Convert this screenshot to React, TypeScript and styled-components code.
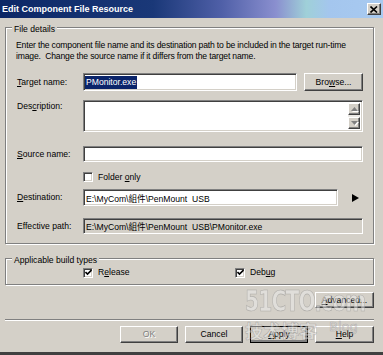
import styled, { createGlobalStyle } from 'styled-components'

const GlobalStyle = createGlobalStyle`
  html, body {
    margin: 0;
    padding: 0;
    background: #d4d0c8;
  }
  body {
    font-family: 'Liberation Sans', Arial, 'Noto Sans CJK TC', sans-serif;
    font-size: 8.6px;
    color: #000;
  }
  * {
    box-sizing: border-box;
  }
`

const raised = `
  background: #d4d0c8;
  border: 1px solid;
  border-color: #fff #404040 #404040 #fff;
  box-shadow: inset -1px -1px 0 #808080;
`

const sunken = `
  border: 1px solid;
  border-color: #808080 #fff #fff #808080;
  box-shadow: inset 1px 1px 0 #404040, inset -1px -1px 0 #d4d0c8;
`

export default function App() {
  return (
    <>
      <GlobalStyle />
      <Window>
        <TitleBar>
          <TitleText>Edit Component File Resource</TitleText>
          <CloseButton>
            <svg width="8" height="7" viewBox="0 0 8 7">
              <path d="M0.5 0.5 L7 6.5 M7 0.5 L0.5 6.5" stroke="#000" strokeWidth="1.6" />
            </svg>
          </CloseButton>
        </TitleBar>

        <Body>
          <GroupBox $h={217} $mt={0}>
            <Caption>File details</Caption>
            <DetailsInner>
              <Hint>
                Enter the component file name and its destination path to be included in the target run-time
                <br />
                image.&nbsp; Change the source name if it differs from the target name.
              </Hint>

              <FieldRow $mt={11.5} $h={18}>
                <Label>
                  <U>T</U>arget name:
                </Label>
                <Controls>
                  <TextBox>
                    <Selected>PMonitor.exe</Selected>
                  </TextBox>
                  <PushButton $w={59}>
                    Bro<U>w</U>se...
                  </PushButton>
                </Controls>
              </FieldRow>

              <FieldRow $mt={9} $h={32}>
                <Label $top>
                  Des<U>c</U>ription:
                </Label>
                <Controls>
                  <MultiLine>
                    <ScrollBar>
                      <ScrollArrow>
                        <svg width="7" height="4" viewBox="0 0 7 4">
                          <path d="M3.5 0 L7 4 L0 4 Z" fill="#808080" />
                        </svg>
                      </ScrollArrow>
                      <ScrollArrow>
                        <svg width="7" height="4" viewBox="0 0 7 4">
                          <path d="M0 0 L7 0 L3.5 4 Z" fill="#808080" />
                        </svg>
                      </ScrollArrow>
                    </ScrollBar>
                  </MultiLine>
                </Controls>
              </FieldRow>

              <FieldRow $mt={14} $h={16}>
                <Label>
                  <U>S</U>ource name:
                </Label>
                <Controls>
                  <TextBox />
                </Controls>
              </FieldRow>

              <FieldRow $mt={10} $h={10}>
                <Label />
                <Controls>
                  <CheckItem>
                    <CheckBox />
                    <span>
                      Folder <U>o</U>nly
                    </span>
                  </CheckItem>
                </Controls>
              </FieldRow>

              <FieldRow $mt={7} $h={17}>
                <Label>
                  <U>D</U>estination:
                </Label>
                <Controls>
                  <TextBox $w={255}>{'E:\\MyCom\\組件\\PenMount  USB'}</TextBox>
                  <ArrowSlot>
                    <svg width="7" height="8" viewBox="0 0 7 8">
                      <path d="M0 0 L7 4 L0 8 Z" fill="#000" />
                    </svg>
                  </ArrowSlot>
                </Controls>
              </FieldRow>

              <FieldRow $mt={12} $h={16}>
                <Label>Effective path:</Label>
                <Controls>
                  <TextBox $disabled>{'E:\\MyCom\\組件\\PenMount  USB\\PMonitor.exe'}</TextBox>
                </Controls>
              </FieldRow>
            </DetailsInner>
          </GroupBox>

          <GroupBox $h={27} $mt={14}>
            <Caption>Applicable build types</Caption>
            <BuildTypes>
              <CheckItem>
                <CheckBox>
                  <CheckMark />
                </CheckBox>
                <span>
                  R<U>e</U>lease
                </span>
              </CheckItem>
              <CheckItem>
                <CheckBox>
                  <CheckMark />
                </CheckBox>
                <span>
                  Deb<U>u</U>g
                </span>
              </CheckItem>
            </BuildTypes>
          </GroupBox>

          <ButtonRow $mt={7} $h={16}>
            <PushButton $w={59}>
              <U>A</U>dvanced...
            </PushButton>
          </ButtonRow>

          <Separator />

          <ButtonRow $mt={5} $h={17}>
            <PushButton $w={58} disabled>
              OK
            </PushButton>
            <PushButton $w={58}>Cancel</PushButton>
            <PushButton $w={58} $default>
              <U>A</U>pply
            </PushButton>
            <PushButton $w={59}>
              <U>H</U>elp
            </PushButton>
          </ButtonRow>
        </Body>

        <Watermark>
          <WatermarkBig>51CTO.com</WatermarkBig>
          <WatermarkSmall>
            技术博客<WatermarkBlog>Blog</WatermarkBlog>
          </WatermarkSmall>
        </Watermark>
      </Window>
    </>
  )
}

function CheckMark() {
  return (
    <svg width="7" height="7" viewBox="0 0 7 7">
      <path d="M0.5 3 L2.5 5 L6.5 1" stroke="#000" strokeWidth="1.6" fill="none" />
    </svg>
  )
}

const Window = styled.div`
  position: relative;
  width: 383px;
  height: 355px;
  overflow: hidden;
  background: #d4d0c8;
  display: flex;
  flex-direction: column;
  border-bottom: 3px solid #404040;
`

const TitleBar = styled.div`
  flex: none;
  height: 18px;
  display: flex;
  align-items: center;
  justify-content: space-between;
  padding: 0 2px 0 2px;
  background: linear-gradient(
    90deg,
    #0c2766 0%,
    #1a3878 40%,
    #5060a8 58%,
    #8a8fcf 72%,
    #9fd0d8 80%,
    #a4c6ee 86%,
    #a8caf0 100%
  );
`

const TitleText = styled.span`
  color: #fff;
  font-weight: bold;
  font-size: 9px;
  line-height: 18px;
`

const CloseButton = styled.div`
  ${raised}
  width: 14px;
  height: 12px;
  display: flex;
  align-items: center;
  justify-content: center;
`

const Body = styled.div`
  display: flex;
  flex-direction: column;
  padding: 9px 9px 0 5px;
`

const GroupBox = styled.div<{ $h: number; $mt: number }>`
  position: relative;
  height: ${(p) => p.$h}px;
  margin-top: ${(p) => p.$mt}px;
  border: 1px solid #808080;
  box-shadow: inset 1px 1px 0 #fff, 1px 1px 0 #fff;
`

const Caption = styled.span`
  position: absolute;
  top: -4px;
  left: 6px;
  padding: 0 2px;
  line-height: 11px;
  background: #d4d0c8;
`

const DetailsInner = styled.div`
  display: flex;
  flex-direction: column;
  padding: 11.5px 10px 0 10px;
`

const Hint = styled.p`
  margin: 0;
  line-height: 11px;
  letter-spacing: -0.17px;
  white-space: nowrap;
`

const FieldRow = styled.div<{ $mt: number; $h: number }>`
  display: flex;
  margin-top: ${(p) => p.$mt}px;
  height: ${(p) => p.$h}px;
`

const Label = styled.label<{ $top?: boolean }>`
  flex: none;
  width: 67px;
  padding-left: 1px;
  line-height: 11px;
  align-self: ${(p) => (p.$top ? 'flex-start' : 'center')};
  padding-top: ${(p) => (p.$top ? '1px' : '0')};
`

const Controls = styled.div`
  flex: 1;
  display: flex;
  gap: 7px;
  align-items: stretch;
`

const TextBox = styled.div<{ $disabled?: boolean; $w?: number }>`
  ${sunken}
  ${(p) => (p.$w ? `width: ${p.$w}px; flex: none;` : 'flex: 1;')}
  background: ${(p) => (p.$disabled ? '#d4d0c8' : '#fff')};
  display: flex;
  align-items: center;
  padding: 0 2px;
  white-space: pre;
  overflow: hidden;
`

const Selected = styled.span`
  background: #0a246a;
  color: #fff;
  line-height: 13px;
  margin-left: -1px;
  padding: 0 1px;
`

const MultiLine = styled(TextBox)`
  justify-content: flex-end;
  align-items: stretch;
  padding: 2px 2px 2px 0;
`

const ScrollBar = styled.div`
  width: 12px;
  display: flex;
  flex-direction: column;
  justify-content: space-between;
  background: #eceae6;
`

const ScrollArrow = styled.div`
  ${raised}
  height: 12px;
  display: flex;
  align-items: center;
  justify-content: center;
  svg {
    filter: drop-shadow(1px 1px 0 #fff);
  }
`

const ArrowSlot = styled.div`
  flex: 1;
  display: flex;
  align-items: center;
  justify-content: center;
  padding-left: 2px;
`

const CheckItem = styled.div`
  display: flex;
  align-items: center;
  gap: 5px;
  line-height: 11px;
`

const CheckBox = styled.div`
  ${sunken}
  width: 10px;
  height: 10px;
  flex: none;
  background: #fff;
  display: flex;
  align-items: center;
  justify-content: center;
`

const BuildTypes = styled.div`
  display: grid;
  grid-template-columns: 152px auto;
  padding: 8px 0 0 77px;
`

const ButtonRow = styled.div<{ $mt: number; $h: number }>`
  display: flex;
  justify-content: flex-end;
  gap: 7px;
  margin-top: ${(p) => p.$mt}px;
  height: ${(p) => p.$h}px;
`

const PushButton = styled.button<{ $w: number; $default?: boolean }>`
  ${raised}
  width: ${(p) => p.$w}px;
  flex: none;
  padding: 0;
  font-family: inherit;
  font-size: inherit;
  color: #000;
  line-height: 11px;
  ${(p) => (p.$default ? 'outline: 1px solid #000; outline-offset: -1px; box-shadow: inset -2px -2px 0 #808080;' : '')}
  &:disabled {
    color: #808080;
    text-shadow: 1px 1px 0 #fff;
  }
`

const U = styled.span`
  text-decoration: underline;
`

const Separator = styled.div`
  margin-top: 11px;
  height: 2px;
  border-top: 1px solid #808080;
  border-bottom: 1px solid #fff;
`

const Watermark = styled.div`
  position: absolute;
  left: 245px;
  top: 285px;
  width: 130px;
  pointer-events: none;
  font-family: 'DejaVu Sans Condensed', 'DejaVu Sans', sans-serif;
  font-weight: bold;
  color: rgba(235, 235, 235, 0.5);
  -webkit-text-stroke: 0.6px rgba(110, 110, 110, 0.4);
`

const WatermarkBig = styled.div`
  font-size: 28px;
  line-height: 34px;
  letter-spacing: -1px;
  transform: scaleX(0.8);
  transform-origin: left center;
  white-space: nowrap;
`

const WatermarkSmall = styled.div`
  display: flex;
  align-items: flex-start;
  gap: 12px;
  font-family: 'Noto Sans CJK SC', sans-serif;
  font-size: 18px;
  line-height: 22px;
  white-space: nowrap;
`

const WatermarkBlog = styled.span`
  font-family: 'DejaVu Sans', sans-serif;
  font-weight: normal;
  font-size: 13px;
  line-height: 16px;
`
